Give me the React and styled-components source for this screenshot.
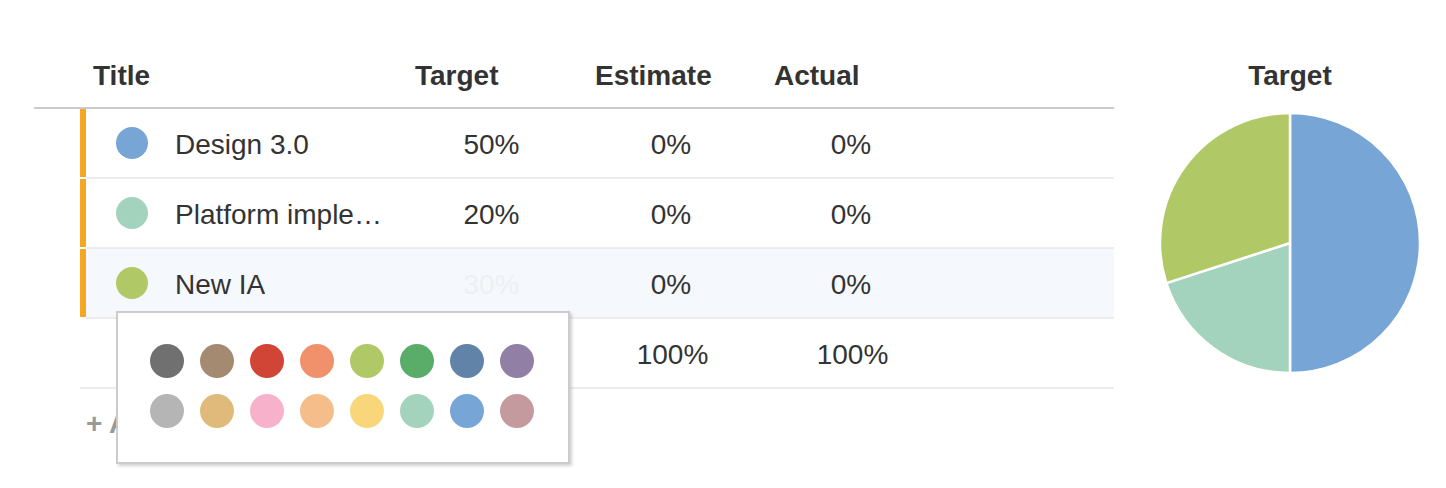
import React from 'react'
import styled, { createGlobalStyle } from 'styled-components'

const GlobalStyle = createGlobalStyle`
  body {
    margin: 0;
    background: #fff;
    font-family: 'Liberation Sans', Arial, Helvetica, sans-serif;
    color: #333;
  }
`

const Page = styled.div`
  display: flex;
  align-items: flex-start;
  width: 1446px;
  height: 488px;
  overflow: hidden;
`

const Table = styled.div`
  width: 1080px;
  margin-left: 34px;
`

const HeaderRow = styled.div`
  display: flex;
  align-items: flex-end;
  box-sizing: border-box;
  height: 109px;
  padding-bottom: 17px;
  border-bottom: 2px solid #cbcbcb;
`

const HeadCell = styled.div`
  box-sizing: border-box;
  width: ${p => p.$w}px;
  padding-left: ${p => p.$pad}px;
  font-size: 28px;
  line-height: 28px;
  font-weight: 700;
  color: #333;
`

const Rows = styled.div`
  margin-left: 46px;
`

const Row = styled.div`
  position: relative;
  display: flex;
  align-items: stretch;
  height: 70px;
`

const Bar = styled.div`
  width: 6px;
  margin-bottom: 2px;
  background: #f5a623;
  flex: none;
`

const RowBody = styled.div`
  flex: 1;
  display: flex;
  align-items: center;
  border-bottom: 2px solid #ececec;
  background: ${p => (p.$active ? '#f5f9fd' : '#fff')};
`

const TitleCell = styled.div`
  box-sizing: border-box;
  width: ${p => p.$w}px;
  display: flex;
  align-items: center;
  padding-left: 30px;
  padding-right: 12px;
  flex: none;
`

const Dot = styled.span`
  width: ${p => p.$size || 32}px;
  height: ${p => p.$size || 32}px;
  border-radius: 50%;
  background: ${p => p.$color};
  flex: none;
`

const Name = styled.span`
  margin-left: 27px;
  padding-top: 4px;
  font-size: 28px;
  line-height: 32px;
  white-space: nowrap;
  overflow: hidden;
  text-overflow: ellipsis;
  min-width: 0;
`

const Value = styled.div`
  width: 180px;
  flex: none;
  padding-top: 4px;
  padding-left: ${p => p.$shift || 0}px;
  box-sizing: border-box;
  text-align: center;
  font-size: 28px;
  line-height: 32px;
  color: ${p => (p.$faded ? '#edf0f3' : '#333')};
`

const AddRow = styled.div`
  display: flex;
  align-items: center;
  height: 68px;
  padding-left: 6px;
  padding-top: 2px;
  box-sizing: border-box;
  font-size: 28px;
  font-weight: 700;
  color: #999;
`

const Picker = styled.div`
  position: absolute;
  left: 36px;
  top: 62px;
  z-index: 2;
  box-sizing: border-box;
  width: 454px;
  height: 153px;
  padding: 31px 34px 34px 32px;
  background: #fff;
  border: 2px solid #cccccc;
  box-shadow: 2px 2px 3px rgba(0, 0, 0, 0.18);
  display: grid;
  grid-template-columns: repeat(8, 34px);
  grid-auto-rows: 34px;
  gap: 16px;
`

const ChartCol = styled.div`
  width: 260px;
  margin-left: 46px;
  padding-top: 62px;
  display: flex;
  flex-direction: column;
  align-items: center;
`

const ChartTitle = styled.div`
  font-size: 28px;
  line-height: 28px;
  font-weight: 700;
  color: #333;
`

const Pie = styled.svg`
  margin-top: 23px;
  display: block;
`

const items = [
  { name: 'Design 3.0', color: '#77a5d6', target: '50%', estimate: '0%', actual: '0%' },
  { name: 'Platform implementation', color: '#a3d3bd', target: '20%', estimate: '0%', actual: '0%' },
  { name: 'New IA', color: '#b0c865', target: '30%', estimate: '0%', actual: '0%', active: true },
]

const palette = [
  '#707070', '#a58a72', '#d04536', '#f0916b', '#b0c865', '#5aad69', '#6283a8', '#917fa6',
  '#b5b5b5', '#e0ba7a', '#f8b1ca', '#f5bd8a', '#f9d67a', '#a3d3bd', '#77a5d6', '#c49a9f',
]

const slices = [
  { color: '#77a5d6', value: 50 },
  { color: '#a3d3bd', value: 20 },
  { color: '#b0c865', value: 30 },
]

const slicePaths = () => {
  const r = 130
  let start = 0
  return slices.map(s => {
    const end = start + (s.value / 100) * Math.PI * 2
    const x1 = r + r * Math.sin(start)
    const y1 = r - r * Math.cos(start)
    const x2 = r + r * Math.sin(end)
    const y2 = r - r * Math.cos(end)
    const large = end - start > Math.PI ? 1 : 0
    start = end
    return { color: s.color, d: `M${r},${r} L${x1},${y1} A${r},${r} 0 ${large} 1 ${x2},${y2} Z` }
  })
}

const App = () => {
  return (
    <Page>
      <GlobalStyle />
      <Table>
        <HeaderRow>
          <HeadCell $w={366} $pad={59}>Title</HeadCell>
          <HeadCell $w={180} $pad={15}>Target</HeadCell>
          <HeadCell $w={180} $pad={15}>Estimate</HeadCell>
          <HeadCell $w={180} $pad={14}>Actual</HeadCell>
        </HeaderRow>
        <Rows>
          {items.map(item => (
            <Row key={item.name}>
              <Bar />
              <RowBody $active={item.active}>
                <TitleCell $w={314}>
                  <Dot $color={item.color} />
                  <Name>{item.name}</Name>
                </TitleCell>
                <Value $faded={item.active} $shift={3}>{item.target}</Value>
                <Value $shift={2}>{item.estimate}</Value>
                <Value $shift={2}>{item.actual}</Value>
              </RowBody>
              {item.active && (
                <Picker>
                  {palette.map(c => (
                    <Dot key={c} $color={c} $size={34} />
                  ))}
                </Picker>
              )}
            </Row>
          ))}
          <Row>
            <RowBody>
              <TitleCell $w={320} />
              <Value $shift={3}>100%</Value>
              <Value $shift={5}>100%</Value>
              <Value $shift={5}>100%</Value>
            </RowBody>
          </Row>
          <AddRow>+ Add item</AddRow>
        </Rows>
      </Table>
      <ChartCol>
        <ChartTitle>Target</ChartTitle>
        <Pie width="260" height="260" viewBox="0 0 260 260">
          {slicePaths().map(p => (
            <path key={p.color} d={p.d} fill={p.color} stroke="#fff" strokeWidth="2.5" strokeLinejoin="round" />
          ))}
        </Pie>
      </ChartCol>
    </Page>
  )
}

export default App
